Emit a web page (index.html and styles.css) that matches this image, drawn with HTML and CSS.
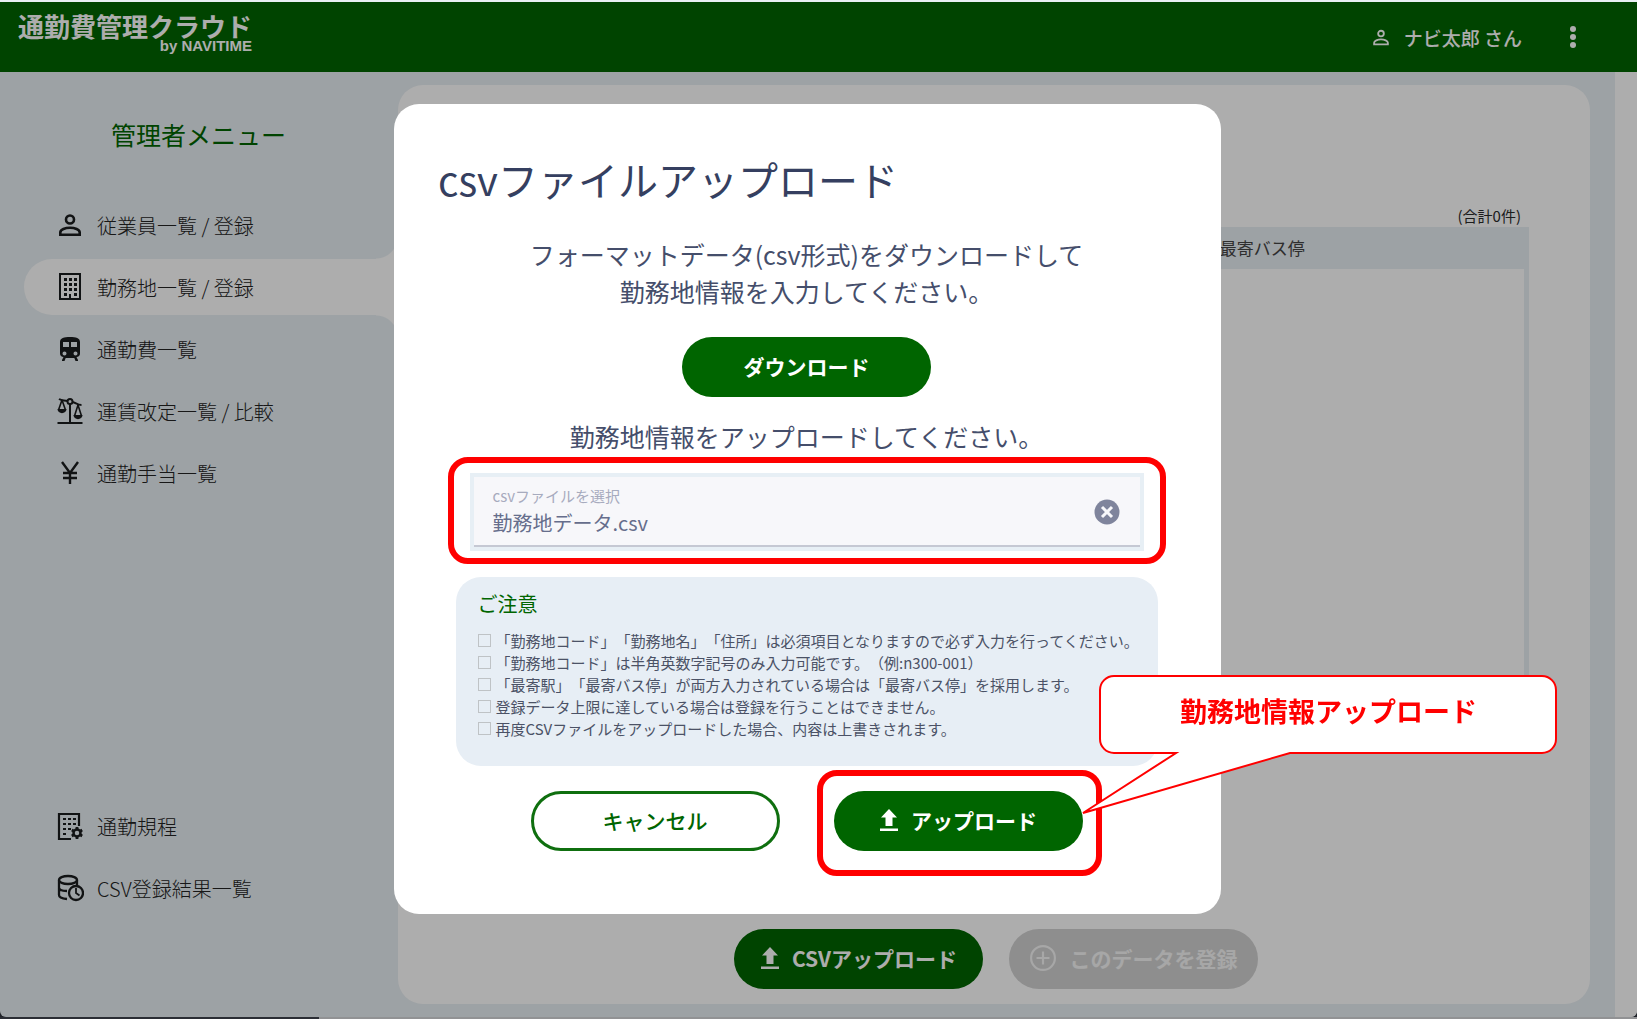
FILE: index.html
```html
<!DOCTYPE html>
<html lang="ja">
<head>
<meta charset="utf-8">
<meta name="viewport" content="width=device-width, initial-scale=1">
<title>通勤費管理クラウド</title>
<link rel="stylesheet" href="styles.css">
</head>
<body>
<svg width="0" height="0" class="sprite" aria-hidden="true">
  <symbol id="person" viewBox="0 0 24 24"><path fill="none" stroke="currentColor" stroke-width="2.600" d="M2.300 21.700v-2.200c0-3 5-4.800 9.700-4.800s9.700 1.800 9.700 4.800v2.200z"/><circle cx="12" cy="6.500" r="4" fill="none" stroke="currentColor" stroke-width="2.600"/></symbol>
  <symbol id="building" viewBox="0 0 28 28"><path fill="none" stroke="currentColor" stroke-width="2" d="M4 1h20v25H4z"/><path fill="currentColor" d="M3 25h22v2H3zM3 0h22v2H3zM8 5h3v3H8zm5 0h3v3h-3zm5 0h3v3h-3zM8 10h3v3H8zm5 0h3v3h-3zm5 0h3v3h-3zM8 15h3v3H8zm5 0h3v3h-3zm5 0h3v3h-3zM8 20h3v3H8zm10 0h3v3h-3zM13 21h2v5h-2z"/></symbol>
  <symbol id="train" viewBox="0 0 24 24"><path fill="currentColor" fill-rule="evenodd" d="M12 0C6 0 2 1 2 5v11.500C2 18.500 3.500 20 5.500 20L4 23v1h2.500l1.200-3h8.600l1.200 3H20v-1l-1.500-3c2 0 3.500-1.500 3.500-3.500V5c0-4-4-5-10-5zM5 5h6v5H5zm8 0h6v5h-6zM6.500 14.500a2 2 0 1 1 0 4 2 2 0 0 1 0-4zm11 0a2 2 0 1 1 0 4 2 2 0 0 1 0-4z"/></symbol>
  <symbol id="scales" viewBox="0 0 28 28"><g fill="none" stroke="currentColor"><path stroke-width="2" d="M3 2c3 2 5 1 8.500 2M16.500 5c3 .5 5 3 9 3M14 6.500V25M1.500 26h25"/><path stroke-width="1.600" d="M6 3L2.500 13M6 3l3.500 10M22 8l-3.500 11M22 8l3.500 11"/><circle cx="14" cy="4.500" r="2.500" stroke-width="2"/></g><path fill="currentColor" d="M1.500 12h9c0 5.500-9 5.500-9 0zM17.500 18h9c0 5.500-9 5.500-9 0z"/></symbol>
  <symbol id="yen" viewBox="0 0 24 24"><path fill="none" stroke="currentColor" stroke-width="2.400" d="M4 1l8 11 8-11M12 12v11M5 12h14M5 17h14"/></symbol>
  <symbol id="building-gear" viewBox="0 0 28 28"><path fill="none" stroke="currentColor" stroke-width="2.200" d="M23 14V2H3v25h12"/><path fill="currentColor" d="M7 6h3v2H7zm5 0h3v2h-3zm5 0h3v2h-3zM7 11h3v2H7zm5 0h3v2h-3zm5 0h3v2h-3zM7 16h3v2H7zm5 0h3v2h-3zM7 21h3v2H7z"/><circle cx="21" cy="21" r="3.500" fill="none" stroke="currentColor" stroke-width="2.500"/><path fill="none" stroke="currentColor" stroke-width="2.800" d="M21 15v2m0 8v2m-5.200-9l1.800 1m6.900 4l1.700 1m0-6l-1.700 1m-7 4l-1.700 1"/></symbol>
  <symbol id="db-clock" viewBox="0 0 28 28"><g fill="none" stroke="currentColor" stroke-width="2.300"><ellipse cx="12" cy="6" rx="9" ry="4"/><path d="M3 6v15c0 2 3 3.500 8 4M3 13.500c0 2 3 3.500 8 3.500M21 6v5"/><circle cx="20" cy="19" r="7"/><path stroke-width="1.800" d="M20 14v5l3.500 2.500"/></g></symbol>
  <symbol id="upload" viewBox="0 0 20 24"><path fill="currentColor" d="M10 1l8 8.500h-4.500V18h-7V9.500H2zM1 20.500h18V23H1z"/></symbol>
  <symbol id="plus-circle" viewBox="0 0 24 24"><path fill="none" stroke="currentColor" stroke-width="2" d="M12 1a11 11 0 1 0 0 22 11 11 0 0 0 0-22zM12 6v12M6 12h12"/></symbol>
</svg>

<div class="app">
  <header class="topbar">
    <div class="brand"><span class="brand-name">通勤費管理クラウド</span><span class="brand-by">by NAVITIME</span></div>
    <div class="account">
      <svg class="account-icon"><use href="#person"/></svg>
      <span>ナビ太郎 さん</span>
      <button class="kebab" type="button" aria-label="メニュー"><i></i><i></i><i></i></button>
    </div>
  </header>
  <div class="workspace">
    <nav class="sidebar">
      <h2 class="sidebar-title">管理者メニュー</h2>
      <a class="nav-item" href="#"><svg class="nav-icon small"><use href="#person"/></svg>従業員一覧 / 登録</a>
      <a class="nav-item active" href="#"><svg class="nav-icon"><use href="#building"/></svg>勤務地一覧 / 登録</a>
      <a class="nav-item" href="#"><svg class="nav-icon small"><use href="#train"/></svg>通勤費一覧</a>
      <a class="nav-item" href="#"><svg class="nav-icon"><use href="#scales"/></svg>運賃改定一覧 / 比較</a>
      <a class="nav-item" href="#"><svg class="nav-icon small"><use href="#yen"/></svg>通勤手当一覧</a>
      <div class="nav-bottom">
        <a class="nav-item" href="#"><svg class="nav-icon"><use href="#building-gear"/></svg>通勤規程</a>
        <a class="nav-item" href="#"><svg class="nav-icon"><use href="#db-clock"/></svg>CSV登録結果一覧</a>
      </div>
    </nav>
    <main class="panel">
      <p class="count">(合計0件)</p>
      <table class="list">
        <thead><tr><td></td><th scope="col">最寄バス停</th></tr></thead>
        <tbody><tr><td colspan="2"></td></tr></tbody>
      </table>
      <div class="panel-actions">
        <button class="btn" type="button"><svg class="btn-icon"><use href="#upload"/></svg>CSVアップロード</button>
        <button class="btn disabled" type="button" disabled><svg class="plus-icon"><use href="#plus-circle"/></svg>このデータを登録</button>
      </div>
    </main>
    <div class="scrollbar"></div>
  </div>
  <div class="edge"></div>
</div>

<div class="overlay">
  <section class="modal" role="dialog" aria-labelledby="dialog-title">
    <h1 id="dialog-title" class="modal-title">csvファイルアップロード</h1>
    <p class="lead">フォーマットデータ(csv形式)をダウンロードして<br>勤務地情報を入力してください。</p>
    <button class="btn download" type="button">ダウンロード</button>
    <p class="lead">勤務地情報をアップロードしてください。</p>
    <div class="file-field marked">
      <div class="file-inner">
        <div class="file-text">
          <label class="file-label" for="csv">csvファイルを選択</label>
          <input class="file-name" id="csv" type="text" value="勤務地データ.csv" readonly>
        </div>
        <button class="clear" type="button" aria-label="クリア"><svg viewBox="0 0 26 26"><circle cx="13" cy="13" r="12.500" fill="#7f849c"/><path d="M8 8l10 10M18 8L8 18" stroke="#f7f7fa" stroke-width="3"/></svg></button>
      </div>
    </div>
    <div class="notice">
      <h3 class="notice-title">ご注意</h3>
      <label class="check"><input type="checkbox">「勤務地コード」「勤務地名」「住所」は必須項目となりますので必ず入力を行ってください。</label>
      <label class="check"><input type="checkbox">「勤務地コード」は半角英数字記号のみ入力可能です。（例:n300-001）</label>
      <label class="check"><input type="checkbox">「最寄駅」「最寄バス停」が両方入力されている場合は「最寄バス停」を採用します。</label>
      <label class="check"><input type="checkbox">登録データ上限に達している場合は登録を行うことはできません。</label>
      <label class="check"><input type="checkbox">再度CSVファイルをアップロードした場合、内容は上書きされます。</label>
    </div>
    <div class="modal-actions">
      <button class="btn outline" type="button">キャンセル</button>
      <div class="upload-wrap marked">
        <button class="btn" type="button"><svg class="btn-icon"><use href="#upload"/></svg>アップロード</button>
        <div class="callout">
          <svg class="callout-shape" viewBox="0 0 476 140"><path fill="#fff" stroke="#f00" stroke-width="2" d="M32 1h428a14 14 0 0 1 14 14v49a14 14 0 0 1-14 14H208L1 138 94 78H32a14 14 0 0 1-14-14V15A14 14 0 0 1 32 1z"/></svg>
          <p class="callout-text">勤務地情報アップロード</p>
        </div>
      </div>
    </div>
  </section>
</div>
</body>
</html>
```
FILE: styles.css
```css
* { box-sizing: border-box; }
body {
  margin: 0;
  font-family: "Noto Sans CJK JP", "Noto Sans", sans-serif;
  text-spacing-trim: space-all;
  color: #2b2b2b;
  background: #e8eff3;
}
p, h1, h2, h3 { margin: 0; font-weight: 400; }
button, input { font: inherit; }
button { border: 0; padding: 0; cursor: pointer; }
.sprite { position: absolute; }

.app { min-height: 100vh; display: flex; flex-direction: column; background: #30343f; }
.topbar {
  height: 72px;
  flex: none;
  border-top: 2px solid #e8eff3;
  background: #006500;
  color: #fff;
  display: flex;
  justify-content: space-between;
  padding: 0 61px 0 18px;
}
.brand { display: flex; flex-direction: column; align-items: flex-end; padding-top: 11px; }
.brand-name { font-size: 26px; font-weight: 700; line-height: 26px; }
.brand-by { font: bold 15px/14px "Liberation Sans", Arial, sans-serif; }
.account { display: flex; align-items: center; font-size: 19px; font-weight: 500; }
.account-icon { width: 20px; height: 17px; margin-right: 13px; }
.kebab { display: flex; flex-direction: column; gap: 2px; margin-left: 48px; background: none; }
.kebab i { width: 6px; height: 6px; border-radius: 50%; background: #fff; }

.workspace { flex: 1; display: flex; border-radius: 0 0 6px 6px; background: #e8eff3; overflow: hidden; }
.edge { height: 2px; background: linear-gradient(90deg, #40444f 319px, #d6d8da 319px); }
.sidebar { width: 398px; flex: none; display: flex; flex-direction: column; padding: 44px 0 95px 24px; }
.sidebar-title { color: #006500; font-size: 25px; line-height: 36px; margin: 0 0 45px 87px; }
.nav-item {
  position: relative;
  display: flex;
  align-items: center;
  gap: 13px;
  height: 56px;
  margin-bottom: 6px;
  padding: 0 0 0 32px;
  border-radius: 28px 0 0 28px;
  color: #222;
  font-size: 20px;
  font-weight: 300;
  text-decoration: none;
}
.nav-icon { width: 28px; height: 28px; color: #1a1c1e; }
.nav-icon.small { height: 24px; }
.nav-item.active { background: #fff; }
.nav-item.active::before, .nav-item.active::after {
  content: "";
  position: absolute;
  right: 0;
  width: 22px;
  height: 22px;
}
.nav-item.active::before { bottom: 100%; background: radial-gradient(circle at 0 0, #e8eff3 21px, #fff 22px); }
.nav-item.active::after { top: 100%; background: radial-gradient(circle at 0 100%, #e8eff3 21px, #fff 22px); }
.nav-bottom { margin-top: auto; }

.panel {
  flex: 1;
  display: flex;
  flex-direction: column;
  margin: 13px 25px 13px 0;
  padding: 120px 61px 15px 65px;
  border-radius: 25px;
  background: #fff;
}
.count { font-size: 15px; line-height: 22px; text-align: right; padding-right: 8px; }
.list { width: 100%; border-collapse: separate; border-spacing: 0; background: #fff; }
.list thead { background: #e8eff3; }
.list thead td { width: 71%; }
.list th { height: 42px; padding: 0 0 2px; font-size: 17px; font-weight: 400; text-align: left; color: #454545; }
.list tbody td { height: 470px; border: 5px solid #e8eff3; border-top: 0; }
.panel-actions { display: flex; justify-content: center; gap: 26px; margin-top: auto; }
.scrollbar { width: 22px; background: #fff; }

.btn {
  display: flex;
  align-items: center;
  justify-content: center;
  gap: 12px;
  width: 249px;
  height: 60px;
  padding-bottom: 2px;
  border-radius: 30px;
  background: #006500;
  color: #fff;
  font-size: 21px;
  font-weight: 700;
}
.btn-icon { width: 20px; height: 24px; }
.plus-icon { width: 26px; height: 26px; }
.btn.disabled { gap: 14px; background: #d2d2d2; color: #f6f6f6; }
.btn.outline { background: #fff; color: #006500; border: 3px solid #0f6f0f; font-weight: 500; }

.overlay {
  position: fixed;
  inset: 2px 0 0;
  display: flex;
  align-items: center;
  justify-content: center;
  padding: 0 22px 4px 0;
  background: rgba(0, 0, 0, .32);
}
.modal {
  width: 827px;
  display: flex;
  flex-direction: column;
  align-items: center;
  padding: 45px 46px 63px 44px;
  border-radius: 25px;
  background: #fff;
  color: #454e6b;
}
.modal-title { align-self: flex-start; font-size: 40px; line-height: 60px; margin-bottom: 27px; color: #353f60; }
.lead { font-size: 25px; line-height: 37px; text-align: center; }
.download { margin: 27px 0 21px; }
.marked { position: relative; }
.marked::after {
  content: "";
  position: absolute;
  border: 6px solid #f00;
  border-radius: 20px;
  pointer-events: none;
}
.file-field { width: 674px; margin-top: 18px; border: 4px solid #e7eff5; }
.file-field::after { inset: -20px -26px -17px; }
.file-inner {
  display: flex;
  align-items: center;
  justify-content: space-between;
  height: 70px;
  padding: 2px 20px 0 19px;
  border-bottom: 2px solid #c5c8d3;
  background: #f7f7fa;
}
.file-text { flex: 1; display: flex; flex-direction: column; }
.file-label { font-size: 15px; line-height: 22px; color: #a7abbe; }
.file-name { border: 0; padding: 0; height: 32px; background: none; font-size: 20px; color: #666e8c; outline: 0; }
.clear { width: 26px; height: 26px; background: none; }
.clear svg { display: block; }
.notice {
  width: 702px;
  margin: 26px 0 25px;
  padding: 12px 10px 26px 22px;
  border-radius: 25px;
  background: #e7eef5;
}
.notice-title { font-size: 20px; line-height: 30px; color: #006500; margin-bottom: 11px; }
.check { display: flex; align-items: center; gap: 5px; font-size: 15px; line-height: 22px; white-space: nowrap; color: #4b5266; }
.check input { flex: none; appearance: none; width: 13px; height: 13px; margin: 0; border: 1px solid #bfc3c6; }
.modal-actions { display: flex; gap: 54px; }
.upload-wrap::after { inset: -21px -19px -25px -17px; }

.callout { position: absolute; z-index: 1; left: 248px; top: -116px; width: 476px; height: 140px; }
.callout-shape { display: block; width: 476px; height: 140px; }
.callout-text {
  position: absolute;
  inset: 0 0 68px 18px;
  display: flex;
  align-items: center;
  justify-content: center;
  color: #f00;
  font-size: 27px;
  font-weight: 700;
}
```
